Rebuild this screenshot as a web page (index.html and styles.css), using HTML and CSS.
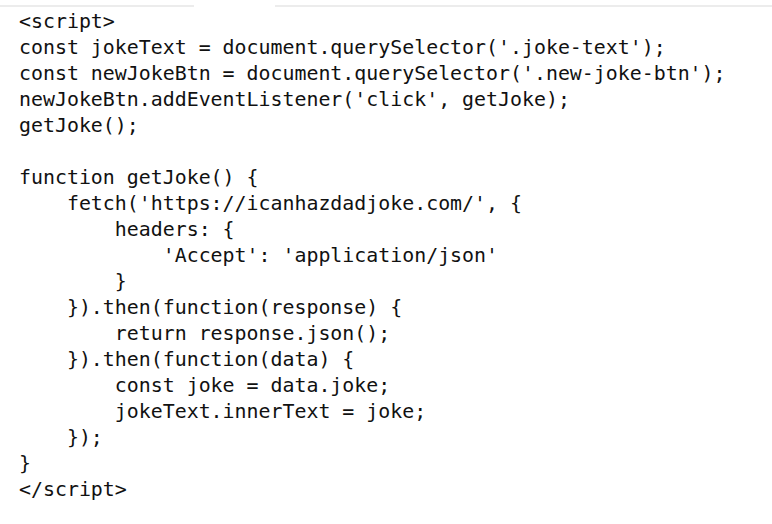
FILE: index.html
```html
<!DOCTYPE html>
<html>
<head>
<meta charset="utf-8">
<link rel="stylesheet" href="styles.css">
</head>
<body>
<div class="rule"><span class="seg seg-a"></span><span class="seg seg-b"></span></div>
<pre class="code">&lt;script&gt;
const jokeText = document.querySelector('.joke-text');
const newJokeBtn = document.querySelector('.new-joke-btn');
newJokeBtn.addEventListener('click', getJoke);
getJoke();

function getJoke() {
    fetch('https://icanhazdadjoke.com/', {
        headers: {
            'Accept': 'application/json'
        }
    }).then(function(response) {
        return response.json();
    }).then(function(data) {
        const joke = data.joke;
        jokeText.innerText = joke;
    });
}
&lt;/script&gt;</pre>
</body>
</html>
```
FILE: styles.css
```css
html, body {
  margin: 0;
  padding: 0;
  background: #ffffff;
}
.rule {
  display: flex;
  gap: 81px;
  padding-top: 5px;
  height: 2px;
}
.seg {
  display: block;
  height: 2px;
  background: #ececec;
}
.seg-a {
  width: 194px;
}
.seg-b {
  flex: 1;
}
.code {
  margin: 0;
  padding: 2px 0 0 19px;
  font-family: "DejaVu Sans Mono", monospace;
  font-size: 19.9px;
  line-height: 26px;
  color: #111111;
}
```
